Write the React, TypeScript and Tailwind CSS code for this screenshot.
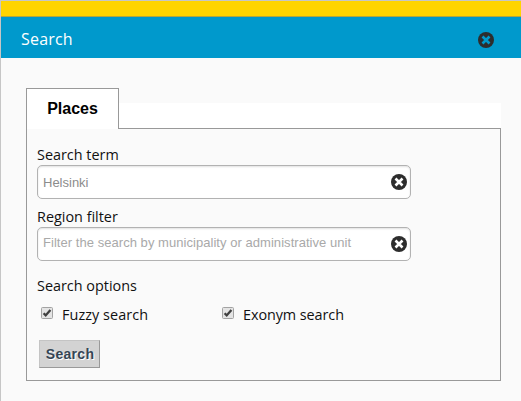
import React from "react";

function ClearIcon({ cross }: { cross: string }) {
  return (
    <svg width="16" height="16" viewBox="0 0 16 16" className="block shrink-0">
      <circle cx="8" cy="8" r="8" fill="#2d2d2d" />
      <path d="M4.5 4.5 L11.5 11.5 M11.5 4.5 L4.5 11.5" stroke={cross} strokeWidth="2.6" strokeLinecap="butt" />
    </svg>
  );
}

function Field({ text, tone }: { text: string; tone: string }) {
  return (
    <div className="flex h-[34px] w-[374px] items-center justify-between rounded-[5px] border border-[#b2b2b2] bg-white pr-[3px] pl-[5px] shadow-[inset_0_1px_2px_rgba(0,0,0,0.12)]">
      <span className={`font-['Liberation_Sans',Arial,sans-serif] text-[13px] leading-4 whitespace-nowrap ${tone}`}>
        {text}
      </span>
      <ClearIcon cross="#ffffff" />
    </div>
  );
}

function Option({ label, tone }: { label: string; tone: string }) {
  return (
    <label className="flex w-[181px] items-start">
      <svg width="12" height="12" viewBox="0 0 12 12" className="mt-[2px] block shrink-0">
        <rect x="0.5" y="0.5" width="11" height="11" rx="1" fill="#e4e4e4" stroke="#a3a3a3" />
        <path d="M2.6 6.2 L4.7 8.4 L9.4 2.9" fill="none" stroke="#404040" strokeWidth="2.3" />
      </svg>
      <span className={`ml-[9px] text-[14.4px] leading-5 whitespace-nowrap ${tone}`}>{label}</span>
    </label>
  );
}

export default function App() {
  return (
    <div className="h-[401px] w-[521px] overflow-hidden border-t border-l border-[#c6c6c6] bg-[#fafafa] font-['Open_Sans',sans-serif] text-[#111111]">
      <div className="h-4 border-b border-[#b5a63c] bg-[#ffd400]" />
      <header className="flex h-[41px] items-center justify-between bg-[#0099cc] pr-[27px] pl-5">
        <h1 className="pt-[2px] text-[16px] leading-6 tracking-[0.2px] text-white">Search</h1>
        <div className="mt-[5px]">
          <ClearIcon cross="#0099cc" />
        </div>
      </header>
      <main className="mt-[30px] ml-[25px] w-[475px]">
        <div className="flex h-[41px] items-end">
          <div className="flex h-[41px] w-[93px] items-center justify-center border-x border-t border-[#999999] bg-white font-['Liberation_Sans',Arial,sans-serif] text-[16px] font-bold text-black">
            Places
          </div>
          <div className="h-[26px] flex-1 border-b border-[#999999] bg-white" />
        </div>
        <section className="h-[252px] border-x border-b border-[#999999] pt-4 pl-[10px]">
          <div className="h-5 text-[14.4px] leading-5">Search term</div>
          <Field text="Helsinki" tone="pt-[2px] text-[#8c8c8c]" />
          <div className="mt-2 h-5 text-[14.4px] leading-5">Region filter</div>
          <Field
            text="Filter the search by municipality or administrative unit"
            tone="pb-[2px] text-[#a9a9a9] tracking-[0.045px]"
          />
          <div className="mt-[15px] h-5 text-[14.4px] leading-5">Search options</div>
          <div className="mt-[9px] ml-1 flex h-5">
            <Option label="Fuzzy search" tone="tracking-[0.07px]" />
            <Option label="Exonym search" tone="tracking-[-0.07px]" />
          </div>
          <button className="mt-[15px] ml-[2px] block h-7 w-[61px] border border-t-[#c4c4c4] border-r-[#999999] border-b-[#999999] border-l-[#c4c4c4] bg-[#d3d3d3] pl-px font-['Liberation_Sans',Arial,sans-serif] text-[14px] leading-[26px] font-bold tracking-[0.3px] text-[#364554] [text-shadow:1px_1px_0_#ffffff]">
            Search
          </button>
        </section>
      </main>
    </div>
  );
}
